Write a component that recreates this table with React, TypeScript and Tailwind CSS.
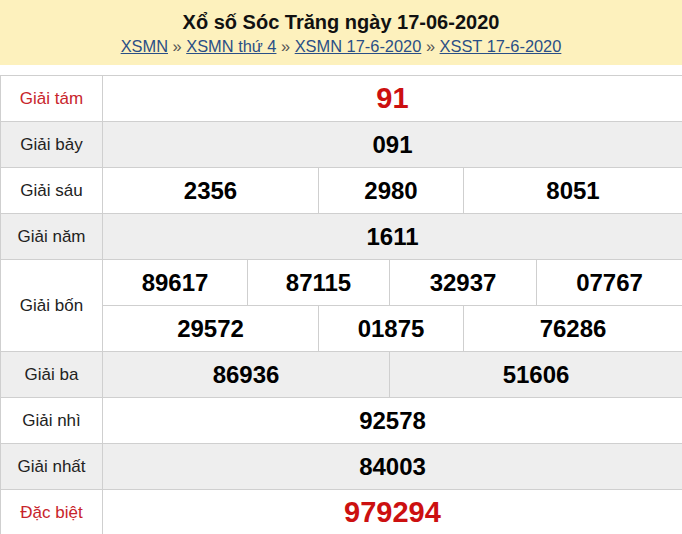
import React from "react";

const F = { fontFamily: '"Liberation Sans", Arial, sans-serif' };

function Label({ children, red, gray, span2 }: { children: React.ReactNode; red?: boolean; gray?: boolean; span2?: boolean }) {
  return (
    <div
      className={`flex items-center justify-center border-r border-b border-[#cfcfcf] text-[17px] ${red ? "text-[#c8242b]" : "text-[#222]"} ${gray ? "bg-[#eeeeee]" : "bg-white"} ${span2 ? "row-span-2" : ""}`}
    >
      {children}
    </div>
  );
}

function Num({ children, span, gray, red, big }: { children: React.ReactNode; span: string; gray?: boolean; red?: boolean; big?: boolean }) {
  return (
    <div
      className={`${span} flex items-center justify-center border-r border-b border-[#cfcfcf] font-bold ${big ? "text-[29px]" : "text-[24px]"} ${red ? "text-[#cc1010]" : "text-black"} ${gray ? "bg-[#eeeeee]" : "bg-white"}`}
    >
      {children}
    </div>
  );
}

export default function App() {
  return (
    <div className="w-[682px] h-[534px] bg-white overflow-hidden" style={F}>
      <div className="bg-[#fdf1bd] h-[65px] flex flex-col items-center pt-[8px]">
        <div className="text-[20px] font-bold text-[#111] leading-[28px]">Xổ số Sóc Trăng ngày 17-06-2020</div>
        <div className="text-[16.4px] leading-[20px] text-[#555]">
          <a className="text-[#2a4f86] underline">XSMN</a> » <a className="text-[#2a4f86] underline">XSMN thứ 4</a> »{" "}
          <a className="text-[#2a4f86] underline">XSMN 17-6-2020</a> » <a className="text-[#2a4f86] underline">XSST 17-6-2020</a>
        </div>
      </div>
      <div className="h-[10px]" />
      <div className="grid grid-cols-[102px_145px_71px_71px_74px_73px_146px] auto-rows-[46px] border-l border-t border-[#cfcfcf] w-[683px]">
        <Label red>Giải tám</Label>
        <Num span="col-span-6" red big>91</Num>

        <Label gray>Giải bảy</Label>
        <Num span="col-span-6" gray>091</Num>

        <Label>Giải sáu</Label>
        <Num span="col-span-2">2356</Num>
        <Num span="col-span-2">2980</Num>
        <Num span="col-span-2">8051</Num>

        <Label gray>Giải năm</Label>
        <Num span="col-span-6" gray>1611</Num>

        <Label span2>Giải bốn</Label>
        <Num span="col-span-1">89617</Num>
        <Num span="col-span-2">87115</Num>
        <Num span="col-span-2">32937</Num>
        <Num span="col-span-1">07767</Num>
        <Num span="col-span-2">29572</Num>
        <Num span="col-span-2">01875</Num>
        <Num span="col-span-2">76286</Num>

        <Label gray>Giải ba</Label>
        <Num span="col-span-3" gray>86936</Num>
        <Num span="col-span-3" gray>51606</Num>

        <Label>Giải nhì</Label>
        <Num span="col-span-6">92578</Num>

        <Label gray>Giải nhất</Label>
        <Num span="col-span-6" gray>84003</Num>

        <Label red>Đặc biệt</Label>
        <Num span="col-span-6" red big>979294</Num>
      </div>
    </div>
  );
}
